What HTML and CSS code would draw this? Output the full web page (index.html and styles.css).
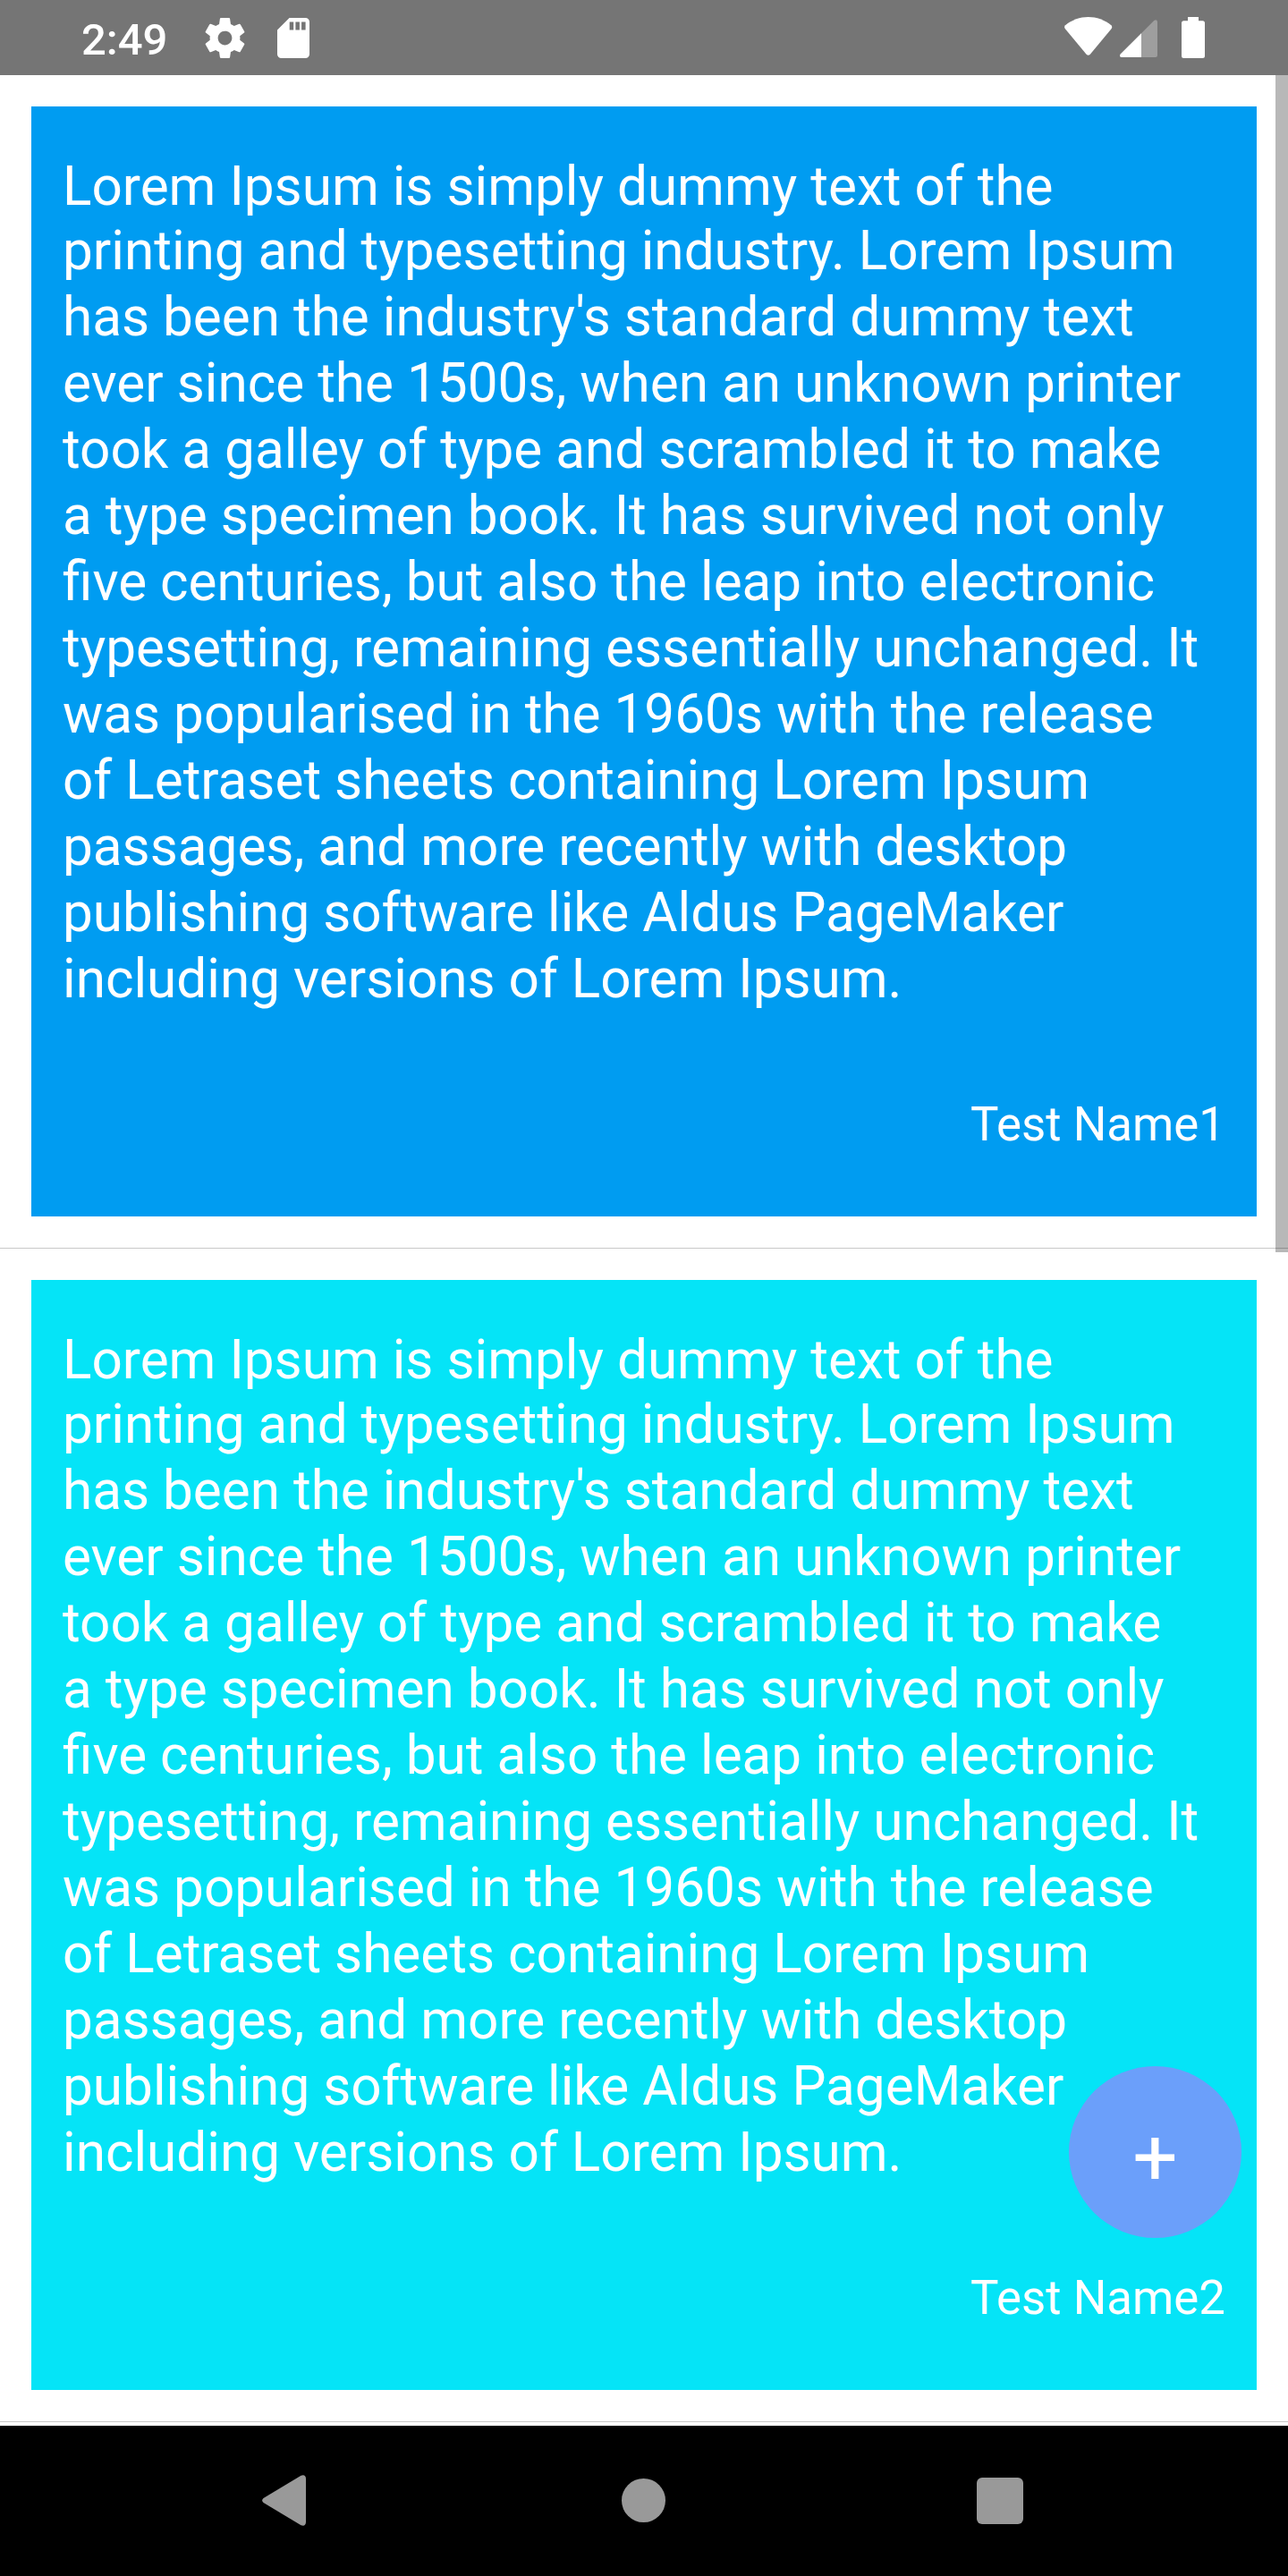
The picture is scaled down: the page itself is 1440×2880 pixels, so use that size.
FILE: index.html
```html
<!DOCTYPE html>
<html lang="en">
<head>
<meta charset="utf-8">
<title>Posts</title>
<link rel="stylesheet" href="styles.css">
</head>
<body>
<div class="screen">
  <header class="status">
    <span class="clock">2:49</span>
    <svg class="gear" viewBox="2 2 20 20"><path d="M19.43 12.98c.04-.32.07-.64.07-.98s-.03-.66-.07-.98l2.11-1.65c.19-.15.24-.42.12-.64l-2-3.46c-.12-.22-.39-.3-.61-.22l-2.49 1c-.52-.4-1.08-.73-1.69-.98l-.38-2.65C14.46 2.18 14.25 2 14 2h-4c-.25 0-.46.18-.49.42l-.38 2.65c-.61.25-1.17.59-1.69.98l-2.49-1c-.23-.09-.49 0-.61.22l-2 3.46c-.13.22-.07.49.12.64l2.11 1.65c-.04.32-.07.65-.07.98s.03.66.07.98l-2.11 1.65c-.19.15-.24.42-.12.64l2 3.46c.12.22.39.3.61.22l2.49-1c.52.4 1.08.73 1.69.98l.38 2.65c.03.24.24.42.49.42h4c.25 0 .46-.18.49-.42l.38-2.65c.61-.25 1.17-.59 1.69-.98l2.49 1c.23.09.49 0 .61-.22l2-3.46c.12-.22.07-.49-.12-.64l-2.11-1.65zM12 15.5c-1.93 0-3.5-1.57-3.5-3.5s1.57-3.5 3.5-3.5 3.5 1.57 3.5 3.5-1.57 3.5-3.5 3.5z"/></svg>
    <svg class="card-icon" viewBox="0 0 36 45"><path fill-rule="evenodd" d="M13.500 0H31.500a4.500 4.500 0 0 1 4.500 4.500V40.500a4.500 4.500 0 0 1-4.500 4.500H4.500a4.500 4.500 0 0 1-4.500-4.500V13.500zM13.700 4.500v9h4.500v-9zM20.400 4.500v9h4.500v-9zM27.100 4.500v9h4.500v-9z"/></svg>
    <span class="grow"></span>
    <svg class="wifi" viewBox="0 0 54 43"><path d="M1 9.200C8.500 3.200 17.500 0 26.700 0S45 3.200 52.300 9.200Q54 11 52.700 13L28.600 41.900Q26.700 43.500 24.800 41.900L.7 13Q-.7 11 1 9.200z"/></svg>
    <svg class="signal" viewBox="0 0 42 42"><path opacity=".3" d="M38.500.8Q42-1 42 3V39.500Q42 42 39.500 42H2.500Q-1 42 .7 38.600z"/><path d="M24 15.300V42H2.500Q-1 42 .7 38.600z"/></svg>
    <svg class="battery" viewBox="0 0 26 46"><path d="M7 0h12v4.300h4.500Q26 4.300 26 6.800V43.500Q26 46 23.500 46h-21Q0 46 0 43.500V6.800Q0 4.300 2.500 4.300H7z"/></svg>
  </header>
  <main class="list">
    <article class="item">
      <div class="post blue">
        <p class="body"><span class="lead">Lorem Ipsum is simply dummy text of the</span>printing and typesetting industry. Lorem Ipsum<br>has been the industry's standard dummy text<br>ever since the 1500s, when an unknown printer<br>took a galley of type and scrambled it to make<br>a type specimen book. It has survived not only<br>five centuries, but also the leap into electronic<br>typesetting, remaining essentially unchanged. It<br>was popularised in the 1960s with the release<br>of Letraset sheets containing Lorem Ipsum<br>passages, and more recently with desktop<br>publishing software like Aldus PageMaker<br>including versions of Lorem Ipsum.</p>
        <p class="author">Test Name1</p>
      </div>
    </article>
    <article class="item">
      <div class="post cyan">
        <p class="body"><span class="lead">Lorem Ipsum is simply dummy text of the</span>printing and typesetting industry. Lorem Ipsum<br>has been the industry's standard dummy text<br>ever since the 1500s, when an unknown printer<br>took a galley of type and scrambled it to make<br>a type specimen book. It has survived not only<br>five centuries, but also the leap into electronic<br>typesetting, remaining essentially unchanged. It<br>was popularised in the 1960s with the release<br>of Letraset sheets containing Lorem Ipsum<br>passages, and more recently with desktop<br>publishing software like Aldus PageMaker<br>including versions of Lorem Ipsum.</p>
        <p class="author">Test Name2</p>
      </div>
    </article>
    <div class="scrollbar"></div>
    <button class="fab">+</button>
  </main>
  <nav class="navbar">
    <svg class="back" viewBox="0 0 49 57"><path d="M1.500 26L43.500.8Q48.500-1 49 4V53Q48.500 58 43.500 56.200L1.500 31Q-1.200 28.500 1.500 26z"/></svg>
    <span class="home"></span>
    <span class="recent"></span>
  </nav>
</div>
</body>
</html>
```

FILE: styles.css
```css
* { box-sizing: border-box; margin: 0; padding: 0; }
body { background: #fff; font-family: Roboto, sans-serif; color: #fff; }
.screen { width: 1440px; height: 2880px; display: flex; flex-direction: column; overflow: hidden; }
svg { display: block; flex: none; fill: #fff; }

.status { height: 84px; flex: none; background: #757575; display: flex; align-items: flex-start; padding: 0 93px 0 91px; }
.clock { width: 138px; flex: none; font-size: 49px; line-height: 58px; font-weight: 500; padding-top: 16px; }
.gear { width: 45px; height: 45px; margin-top: 20px; }
.card-icon { width: 36px; height: 45px; margin: 20px 0 0 36px; }
.grow { flex: 1; }
.wifi { width: 54px; height: 43px; margin-top: 19px; }
.signal { width: 42px; height: 42px; margin: 22px 0 0 8px; }
.battery { width: 26px; height: 46px; margin: 19px 0 0 27px; }

.list { height: 2628px; flex: none; position: relative; overflow: hidden; }
.item { padding: 35px; border-bottom: 1px solid #c8c8c8; }
.post { height: 1241px; padding: 55px 35px 0; display: flex; flex-direction: column; }
.blue { background: #009cf1; }
.cyan { background: #05e4f7; }
.body { font-size: 60.25px; line-height: 74px; white-space: nowrap; }
.lead { display: block; line-height: 70px; }
.author { font-size: 52.8px; line-height: 62px; text-align: right; margin-top: 94px; }
.scrollbar { position: absolute; top: 0; right: 0; width: 14px; height: 1316px; background: rgba(0, 0, 0, .28); }
.fab { position: absolute; left: 1195px; top: 2226px; width: 193px; height: 192px; padding-top: 10px; border: 0; border-radius: 50%; background: #6b9ffa; color: #fff; font: 400 89px/1 Roboto, sans-serif; }

.navbar { flex: 1; background: #000; display: flex; align-items: flex-start; padding-left: 293px; }
.back { width: 49px; height: 57px; fill: #999; margin-top: 55px; }
.home { width: 49px; height: 49px; border-radius: 50%; background: #999; margin: 59px 0 0 353px; }
.recent { width: 52px; height: 52px; border-radius: 6px; background: #999; margin: 58px 0 0 348px; }
```
